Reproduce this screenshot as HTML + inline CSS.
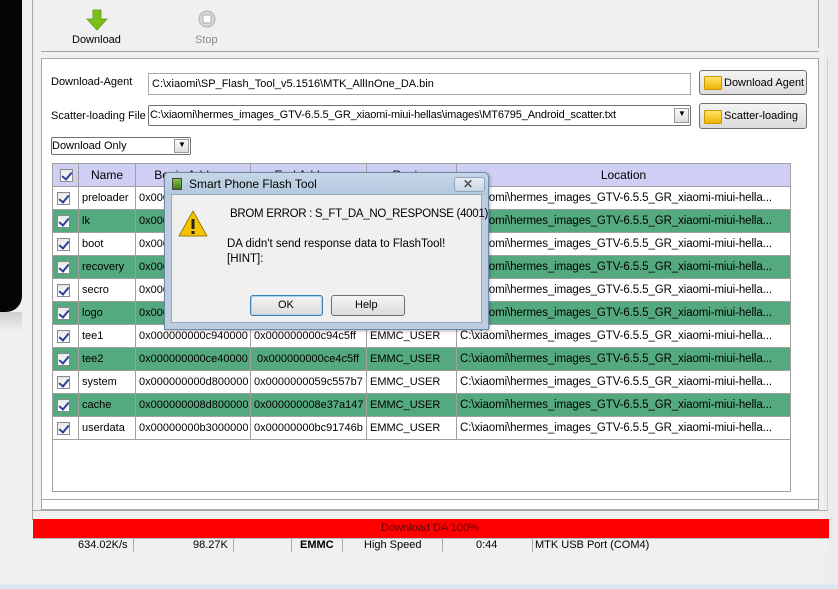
<!DOCTYPE html>
<html><head><meta charset="utf-8"><style>
*{margin:0;padding:0;box-sizing:border-box}
body{width:838px;height:589px;background:#f0f0f0;position:relative;overflow:hidden;font-family:"Liberation Sans",sans-serif;font-size:11px;color:#000}
.a{position:absolute}
.t{position:absolute;white-space:nowrap}
table{border-collapse:collapse;position:absolute;left:52px;top:163px;table-layout:fixed;width:738px}
td{height:23px;border:1px solid #a0a0a0;padding:0 0 0 3px;white-space:nowrap;overflow:hidden;font-size:11px}
td.l{font-size:11.5px;letter-spacing:-0.1px}
tr.h td{background:#cfcff5;text-align:center;padding:0;height:23px;font-size:12px}
tr.g td{background:#55a97f}
tr.w td{background:#fff}
.cb{display:inline-block;width:13px;height:13px;border:1px solid #8a8a8a;background:linear-gradient(#e8e8e8,#fff);position:relative;vertical-align:middle;margin-left:1px}
.cb:after{content:"";position:absolute;left:3px;top:0px;width:4px;height:8px;border:solid #2a3f9a;border-width:0 2px 2px 0;transform:rotate(40deg)}
.btn{position:absolute;border:1px solid #707070;border-radius:3px;background:linear-gradient(#f4f4f4,#dcdcdc);font-size:12px}
.fold{position:absolute;width:18px;height:14px;background:linear-gradient(#ffe36a,#f0b400);border:1px solid #c99600;border-radius:1px}
</style></head><body>
<div class="a" style="left:0;top:0;width:22px;height:312px;background:#050505;border-bottom-right-radius:16px"></div>
<div class="a" style="left:0;top:312px;width:22px;height:20px;background:linear-gradient(#cfcfcf,#f0f0f0)"></div>
<div class="a" style="left:32px;top:0;width:1px;height:520px;background:#a8a8a8"></div>
<svg class="a" style="left:86px;top:9px" width="22" height="22" viewBox="0 0 22 22"><path d="M7 1h8v9h6l-10 11L1 10h6z" fill="#7cbf1a" stroke="#5c9a10" stroke-width="0.8"/></svg>
<div class="t" style="left:72px;top:34px">Download</div>
<svg class="a" style="left:198px;top:10px" width="18" height="18"><circle cx="9" cy="9" r="8" fill="#d8d8d8" stroke="#b0b0b0"/><rect x="5" y="5" width="8" height="8" rx="1" fill="#fff" stroke="#aaa"/></svg>
<div class="t" style="left:195px;top:34px;color:#8a8a8a">Stop</div>
<div class="a" style="left:41px;top:51px;width:778px;height:1px;background:#a0a0a0"></div>
<div class="a" style="left:818px;top:0;width:1px;height:48px;background:#a8a8a8"></div>
<div class="a" style="left:824px;top:0;width:14px;height:584px;background:#ececec"></div>
<div class="a" style="left:41px;top:58px;width:778px;height:452px;border:1px solid #a8a8a8;background:#fff"></div>
<div class="a" style="left:33px;top:58px;width:795px;height:453px;border-bottom:1px solid #a8a8a8;border-right:1px solid #d0d0d0"></div>
<div class="a" style="left:42px;top:59px;width:776px;height:441px;border-bottom:1px solid #a8a8a8"></div>
<div class="t" style="left:51px;top:76px">Download-Agent</div>
<div class="a" style="left:148px;top:73px;width:543px;height:22px;border:1px solid #a8a8a8;background:#fff"></div>
<div class="t" style="left:152px;top:78px">C:\xiaomi\SP_Flash_Tool_v5.1516\MTK_AllInOne_DA.bin</div>
<div class="btn" style="left:699px;top:70px;width:108px;height:25px"></div>
<div class="fold" style="left:704px;top:76px"></div>
<div class="t" style="left:724px;top:77px">Download Agent</div>
<div class="t" style="left:51px;top:110px">Scatter-loading File</div>
<div class="a" style="left:148px;top:105px;width:543px;height:21px;border:1px solid #707070;border-radius:2px;background:#fff"></div>
<div class="t" style="left:150px;top:109px;letter-spacing:-0.15px">C:\xiaomi\hermes_images_GTV-6.5.5_GR_xiaomi-miui-hellas\images\MT6795_Android_scatter.txt</div>
<div class="a" style="left:674px;top:108px;width:15px;height:15px;border:1px solid #999;background:linear-gradient(#fafafa,#ddd)"></div>
<div class="t" style="left:678px;top:109px;font-size:8px">▼</div>
<div class="btn" style="left:699px;top:103px;width:108px;height:26px"></div>
<div class="fold" style="left:704px;top:110px"></div>
<div class="t" style="left:724px;top:110px">Scatter-loading</div>
<div class="a" style="left:51px;top:137px;width:140px;height:18px;border:1px solid #707070;border-radius:2px;background:#fff"></div>
<div class="t" style="left:52px;top:140px">Download Only</div>
<div class="a" style="left:174px;top:139px;width:15px;height:14px;border:1px solid #999;background:linear-gradient(#fafafa,#ddd)"></div>
<div class="t" style="left:178px;top:140px;font-size:8px">▼</div>
<div class="a" style="left:52px;top:163px;width:739px;height:329px;border:1px solid #a0a0a0;background:#fff"></div>
<table>
<colgroup><col style="width:26px"><col style="width:57px"><col style="width:115px"><col style="width:116px"><col style="width:90px"><col style="width:334px"></colgroup>
<tr class="h"><td><span class="cb"></span></td><td>Name</td><td>Begin Address</td><td>End Address</td><td>Region</td><td>Location</td></tr>
<tr class="w"><td><span class="cb"></span></td><td>preloader</td><td>0x0000000000000000</td><td>0x000000000001f3ff</td><td>EMMC_BOOT_1</td><td class="l">C:\xiaomi\hermes_images_GTV-6.5.5_GR_xiaomi-miui-hella...</td></tr>
<tr class="g"><td><span class="cb"></span></td><td>lk</td><td>0x0000000003b00000</td><td>0x0000000003b5f3ff</td><td>EMMC_USER</td><td class="l">C:\xiaomi\hermes_images_GTV-6.5.5_GR_xiaomi-miui-hella...</td></tr>
<tr class="w"><td><span class="cb"></span></td><td>boot</td><td>0x0000000003c00000</td><td>0x0000000004344fff</td><td>EMMC_USER</td><td class="l">C:\xiaomi\hermes_images_GTV-6.5.5_GR_xiaomi-miui-hella...</td></tr>
<tr class="g"><td><span class="cb"></span></td><td>recovery</td><td>0x0000000004c00000</td><td>0x00000000053c0fff</td><td>EMMC_USER</td><td class="l">C:\xiaomi\hermes_images_GTV-6.5.5_GR_xiaomi-miui-hella...</td></tr>
<tr class="w"><td><span class="cb"></span></td><td>secro</td><td>0x0000000006000000</td><td>0x0000000006020fff</td><td>EMMC_USER</td><td class="l">C:\xiaomi\hermes_images_GTV-6.5.5_GR_xiaomi-miui-hella...</td></tr>
<tr class="g"><td><span class="cb"></span></td><td>logo</td><td>0x000000000c000000</td><td>0x000000000c2a3fff</td><td>EMMC_USER</td><td class="l">C:\xiaomi\hermes_images_GTV-6.5.5_GR_xiaomi-miui-hella...</td></tr>
<tr class="w"><td><span class="cb"></span></td><td>tee1</td><td>0x000000000c940000</td><td>0x000000000c94c5ff</td><td>EMMC_USER</td><td class="l">C:\xiaomi\hermes_images_GTV-6.5.5_GR_xiaomi-miui-hella...</td></tr>
<tr class="g"><td><span class="cb"></span></td><td>tee2</td><td>0x000000000ce40000</td><td>&nbsp;0x000000000ce4c5ff</td><td>EMMC_USER</td><td class="l">C:\xiaomi\hermes_images_GTV-6.5.5_GR_xiaomi-miui-hella...</td></tr>
<tr class="w"><td><span class="cb"></span></td><td>system</td><td>0x000000000d800000</td><td>0x0000000059c557b7</td><td>EMMC_USER</td><td class="l">C:\xiaomi\hermes_images_GTV-6.5.5_GR_xiaomi-miui-hella...</td></tr>
<tr class="g"><td><span class="cb"></span></td><td>cache</td><td>0x000000008d800000</td><td>0x000000008e37a147</td><td>EMMC_USER</td><td class="l">C:\xiaomi\hermes_images_GTV-6.5.5_GR_xiaomi-miui-hella...</td></tr>
<tr class="w"><td><span class="cb"></span></td><td>userdata</td><td>0x00000000b3000000</td><td>0x00000000bc91746b</td><td>EMMC_USER</td><td class="l">C:\xiaomi\hermes_images_GTV-6.5.5_GR_xiaomi-miui-hella...</td></tr>
</table>
<div class="a" style="left:164px;top:172px;width:325px;height:158px;border:1px solid #6f8aa8;border-radius:5px 5px 0 0;background:linear-gradient(#c6d6e8,#b4c8de 22px,#bccde0 22px);box-shadow:1px 1px 3px rgba(0,0,0,.3)"></div>
<div class="a" style="left:171px;top:194px;width:311px;height:129px;background:#f0f0f0;border:1px solid #93a9c2"></div>
<div class="a" style="left:172px;top:178px;width:10px;height:12px;background:linear-gradient(#8ac44a,#3f7a1c);border:1px solid #444"></div>
<div class="t" style="left:189px;top:177px;font-size:12px">Smart Phone Flash Tool</div>
<div class="a" style="left:454px;top:177px;width:31px;height:15px;border:1px solid #8ea3bb;border-radius:3px;background:linear-gradient(#e6edf5,#c9d5e3)"></div>
<div class="t" style="left:463px;top:177px;font-size:12px;color:#555;font-weight:bold">✕</div>
<svg class="a" style="left:177px;top:209px" width="32" height="29"><path d="M16 2L30 27H2z" fill="#f5c400" stroke="#9a7a10" stroke-linejoin="round"/><rect x="14.5" y="10" width="3" height="10" fill="#222"/><rect x="14.5" y="22" width="3" height="3" fill="#222"/></svg>
<div class="t" style="left:230px;top:208px;font-size:11.5px;letter-spacing:-0.3px">BROM ERROR : S_FT_DA_NO_RESPONSE (4001)</div>
<div class="t" style="left:227px;top:238px;font-size:11.5px">DA didn't send response data to FlashTool!</div>
<div class="t" style="left:227px;top:253px;font-size:11.5px">[HINT]:</div>
<div class="btn" style="left:250px;top:295px;width:73px;height:21px;border-color:#3c7fb1;box-shadow:inset 0 0 0 1px #a6d6f4"></div>
<div class="t" style="left:278px;top:299px">OK</div>
<div class="btn" style="left:331px;top:295px;width:74px;height:21px"></div>
<div class="t" style="left:355px;top:299px">Help</div>
<div class="a" style="left:33px;top:519px;width:796px;height:19px;background:#ff0000"></div>
<div class="t" style="left:381px;top:522px;font-size:11px;color:#600">Download DA 100%</div>
<div class="a" style="left:33px;top:538px;width:796px;height:14px;background:#f0f0f0;border-top:1px solid #bbb"></div>
<div class="a" style="left:133px;top:539px;width:1px;height:13px;background:#aaa"></div>
<div class="a" style="left:233px;top:539px;width:1px;height:13px;background:#aaa"></div>
<div class="a" style="left:291px;top:539px;width:1px;height:13px;background:#aaa"></div>
<div class="a" style="left:342px;top:539px;width:1px;height:13px;background:#aaa"></div>
<div class="a" style="left:442px;top:539px;width:1px;height:13px;background:#aaa"></div>
<div class="a" style="left:532px;top:539px;width:1px;height:13px;background:#aaa"></div>
<div class="t" style="left:78px;top:539px;font-size:11px">634.02K/s</div>
<div class="t" style="left:193px;top:539px;font-size:11px">98.27K</div>
<div class="t" style="left:300px;top:539px;font-size:11px;font-weight:bold">EMMC</div>
<div class="t" style="left:364px;top:539px;font-size:11px">High Speed</div>
<div class="t" style="left:476px;top:539px;font-size:11px">0:44</div>
<div class="t" style="left:535px;top:539px;font-size:11px">MTK USB Port (COM4)</div>
<div class="a" style="left:0;top:584px;width:838px;height:5px;background:#dbe6f1"></div>
</body></html>
